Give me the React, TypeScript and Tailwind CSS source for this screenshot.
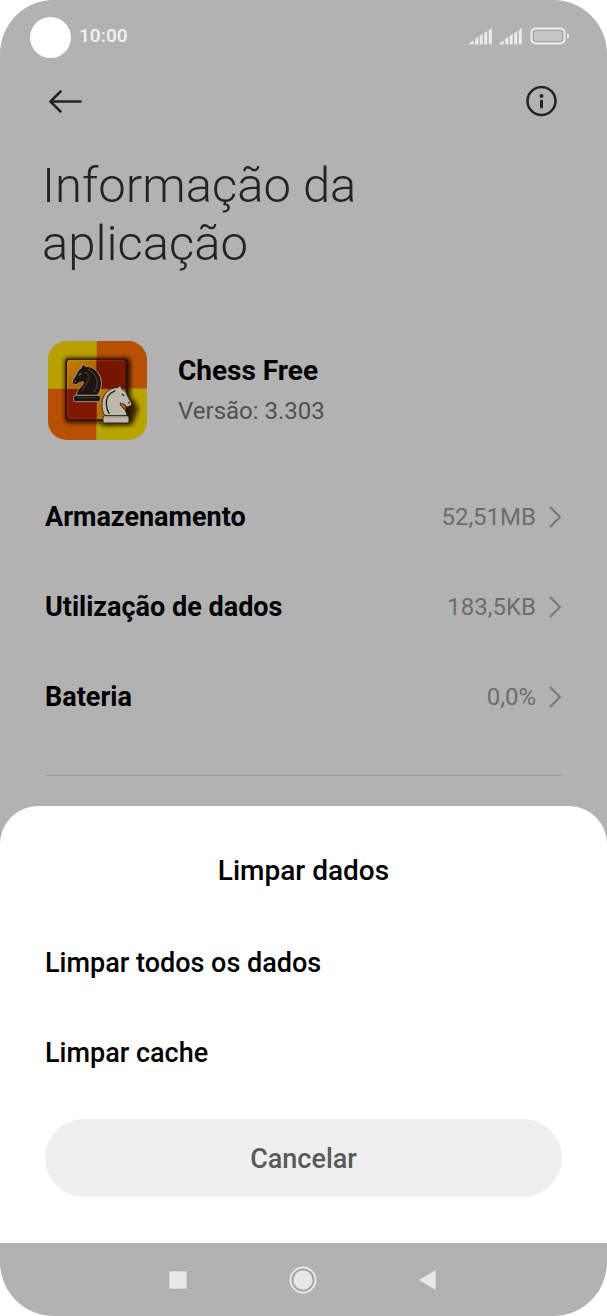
const details = [
  { label: 'Armazenamento', value: '52,51MB' },
  { label: 'Utilização de dados', value: '183,5KB' },
  { label: 'Bateria', value: '0,0%' },
]

const actions = ['Limpar todos os dados', 'Limpar cache']

function Signal() {
  return (
    <svg className="h-[18px] w-6" viewBox="0 0 24 18" fill="#ececec" aria-hidden="true">
      <path d="M.3 17.500v-1L4.600 13.500v4zM6.300 11.800L9.300 10v7.500h-3zM10.700 9l3-2v10.500h-3zM15.200 6.200l3-2v13.300h-3zM19.800 3.200l3-2.200v16.500h-3z" />
    </svg>
  )
}

function Battery() {
  return (
    <svg className="h-[18px] w-10" viewBox="0 0 40 18" aria-hidden="true">
      <rect x="2.500" y="1.500" width="33" height="15" rx="4" fill="none" stroke="#ececec" strokeWidth="2" />
      <rect x="4.500" y="3.500" width="29" height="11" rx="2" fill="#c6c6c6" stroke="#a2a2a2" strokeWidth="1" />
      <path d="M38 6.500c1.500 0 2 .8 2 2.500s-.5 2.500-2 2.500z" fill="#ececec" />
    </svg>
  )
}

function StatusBar() {
  return (
    <div className="flex h-[75px] items-center pl-[30px] pr-[38px]">
      <span className="size-[41px] rounded-full bg-white" />
      <span className="mb-1 ml-2 text-[19px] leading-6 font-semibold text-[#f0f0f0]">10:00</span>
      <div className="mb-1 ml-auto flex items-center gap-1.5">
        <Signal />
        <Signal />
        <Battery />
      </div>
    </div>
  )
}

function ChessIcon() {
  return (
    <svg className="size-[99px] shrink-0" viewBox="30 33 297 297" role="img" aria-label="Chess Free">
      <defs>
        <clipPath id="tile">
          <rect x="30" y="33" width="297" height="297" rx="56" />
        </clipPath>
        <linearGradient id="gold" x1="0" y1="0" x2="1" y2="1">
          <stop offset="0" stopColor="#c17d00" />
          <stop offset="1" stopColor="#a95500" />
        </linearGradient>
        <filter id="shade" x="-30%" y="-30%" width="160%" height="160%">
          <feGaussianBlur stdDeviation="6" />
        </filter>
      </defs>
      <g clipPath="url(#tile)">
        <path d="M30 33h146v143H30z" fill="#b7a000" />
        <path d="M176 33h151v143H176z" fill="#b75002" />
        <path d="M30 176h146v154H30z" fill="#b75002" />
        <path d="M176 176h151v154H176z" fill="#b7a400" />
        <rect x="81" y="84" width="196" height="194" rx="10" fill="#241000" filter="url(#shade)" />
        <path d="M190 288l92-3 20-46-12-30-50-10z" fill="#241000" opacity=".8" filter="url(#shade)" />
        <rect x="83" y="86" width="184" height="184" rx="9" fill="#2e0b00" />
        <path d="M92 91h84v86H88V95z" fill="url(#gold)" />
        <path d="M176 91h82q5 0 5 6v80h-87z" fill="#761600" />
        <path d="M88 177h88v88H94q-6 0-6-6z" fill="#7d1900" />
        <path d="M176 177h87v88h-87z" fill="url(#gold)" />
        <path d="M89 178V96q0-5 5-5h82" fill="none" stroke="#b39a08" strokeWidth="3" />
        <path d="M176 91h82" stroke="#a52800" strokeWidth="3" />
        <path d="M89 178v80q0 8 7 8h80" fill="none" stroke="#a62900" strokeWidth="3" />
        <path d="M176 266h22" stroke="#b39a08" strokeWidth="3" />

        <g stroke="#9b948c" strokeWidth="3" strokeLinejoin="round">
          <path
            d="M134 102l8 7c27 0 47 21 48 50 0 18-5 29-12 37h-62c-3-18 20-25 20-41-9 4-13 2-17 6-3 5-7 5-9 1-5 2-8-2-7-9 3-8 10-13 13-22 3-9 8-13 14-17z"
            fill="#1d1410"
          />
          <rect x="107" y="196" width="80" height="19" rx="6" fill="#1d1410" />
        </g>
        <path d="M139 128c10 2 14 9 13 18-2 16-14 21-20 37" fill="none" stroke="#372821" strokeWidth="7" />
        <path d="M150 119c20 9 29 25 27 44-1 11-4 17-9 24" fill="none" stroke="#6d645c" strokeWidth="2" />
        <path d="M123 135l7-4M110 155l3-2" stroke="#b9b1a6" strokeWidth="3" />
        <path d="M116 203h58" stroke="#40332b" strokeWidth="3" />

        <g stroke="#362b21" strokeWidth="3" strokeLinejoin="round">
          <path
            d="M247 166l-8 7c-26-1-46 20-47 48-1 17 3 28 9 36h65c2-18-17-22-20-38 7 3 13 1 18 8 3 5 8 4 10 1 5 0 8-4 6-10-4-7-9-13-12-22-3-10-8-14-16-18z"
            fill="#bcb8aa"
          />
          <path d="M199 257h68l6 5v14q0 3-4 3h-70q-4 0-4-3v-14z" fill="#bcb8aa" />
        </g>
        <path d="M232 182c-21 9-29 24-27 42 1 12 4 20 9 27" fill="none" stroke="#29221b" strokeWidth="4" />
        <path d="M251 192l8 5M270 219l5-2" stroke="#29221b" strokeWidth="4" />
        <path d="M200 261h66" stroke="#858073" strokeWidth="2" />
      </g>
    </svg>
  )
}

function AppInfo() {
  return (
    <main className="px-[45px]">
      <header className="flex h-[54px] items-center justify-between">
        <button type="button" aria-label="Voltar" className="ml-1">
          <svg className="h-6 w-[34px]" viewBox="0 0 34 24" fill="none" stroke="#242424" strokeWidth="2.500" strokeLinecap="round" strokeLinejoin="round">
            <path d="M11.500 1.500L1.500 11.500L11.500 21.500M2 11.500H31.500" />
          </svg>
        </button>
        <button type="button" aria-label="Informações" className="mr-1">
          <svg className="size-8" viewBox="0 0 32 32" fill="none" stroke="#242424" strokeWidth="2.500" strokeLinecap="round">
            <circle cx="15.500" cy="15" r="14" />
            <path d="M15.500 15v6" strokeWidth="3" />
            <circle cx="15.500" cy="10" r="2" fill="#242424" stroke="none" />
          </svg>
        </button>
      </header>

      <h1 className="-ml-[3px] mt-7 max-w-[360px] text-[49px] leading-[58px] font-light text-[#242424]">
        Informação da aplicação
      </h1>

      <section className="mt-[68px] flex items-center gap-[31px] pl-[3px]">
        <ChessIcon />
        <div>
          <h2 className="text-[28px] leading-9 font-bold text-black">Chess Free</h2>
          <p className="mt-1 text-[24px] leading-9 text-[#515151]">Versão: 3.303</p>
        </div>
      </section>

      <ul className="mt-8 mb-[33px]">
        {details.map((item) => (
          <li key={item.label}>
            <button type="button" className="flex h-[90px] w-full items-center text-left">
              <span className="text-[27px] font-bold text-black">{item.label}</span>
              <span className="ml-auto text-[24px] text-[#6d6d6d]">{item.value}</span>
              <svg className="ml-3 h-6 w-3.5" viewBox="0 0 14 24" fill="none" stroke="#777" strokeWidth="2" aria-hidden="true">
                <path d="M2 2l10 10L2 22" />
              </svg>
            </button>
          </li>
        ))}
      </ul>
      <hr className="border-[#9c9c9c]" />
    </main>
  )
}

function ClearSheet() {
  return (
    <section role="dialog" aria-labelledby="sheet-title" className="mt-[30px] rounded-t-[38px] bg-white px-[45px] pt-[47px] pb-[46px]">
      <h2 id="sheet-title" className="mb-[29px] text-center text-[28px] leading-9 font-medium text-black">
        Limpar dados
      </h2>
      {actions.map((action) => (
        <button key={action} type="button" className="flex h-[90px] w-full items-center text-left text-[27px] font-medium text-black">
          {action}
        </button>
      ))}
      <button type="button" className="mt-[21px] h-[78px] w-full rounded-full bg-[#efefef] pt-0.5 text-[27px] font-medium text-[#5a5a5a]">
        Cancelar
      </button>
    </section>
  )
}

function NavBar() {
  return (
    <nav className="flex h-[73px] items-center justify-center gap-[97px] pr-0.5">
      <button type="button" aria-label="Recentes">
        <svg className="size-7" viewBox="0 0 28 28">
          <rect x="5" y="5" width="18" height="18" rx="1" fill="#e8e8e8" stroke="#a6a6a6" strokeWidth=".5" />
        </svg>
      </button>
      <button type="button" aria-label="Início">
        <svg className="size-7" viewBox="0 0 28 28">
          <circle cx="14" cy="14" r="12.500" fill="#a6a6a6" stroke="#e8e8e8" strokeWidth="2" />
          <circle cx="14" cy="14" r="9.500" fill="#e8e8e8" />
        </svg>
      </button>
      <button type="button" aria-label="Anterior">
        <svg className="size-7" viewBox="0 0 28 28">
          <path d="M4.500 14L22 3.500v21z" fill="#e8e8e8" stroke="#a6a6a6" strokeWidth=".5" />
        </svg>
      </button>
    </nav>
  )
}

export default function App() {
  return (
    <div className="min-h-screen bg-white font-[Roboto,sans-serif]">
      <div className="flex min-h-screen flex-col overflow-hidden rounded-[54px] bg-[#b2b2b2]">
        <StatusBar />
        <AppInfo />
        <ClearSheet />
        <NavBar />
      </div>
    </div>
  )
}
